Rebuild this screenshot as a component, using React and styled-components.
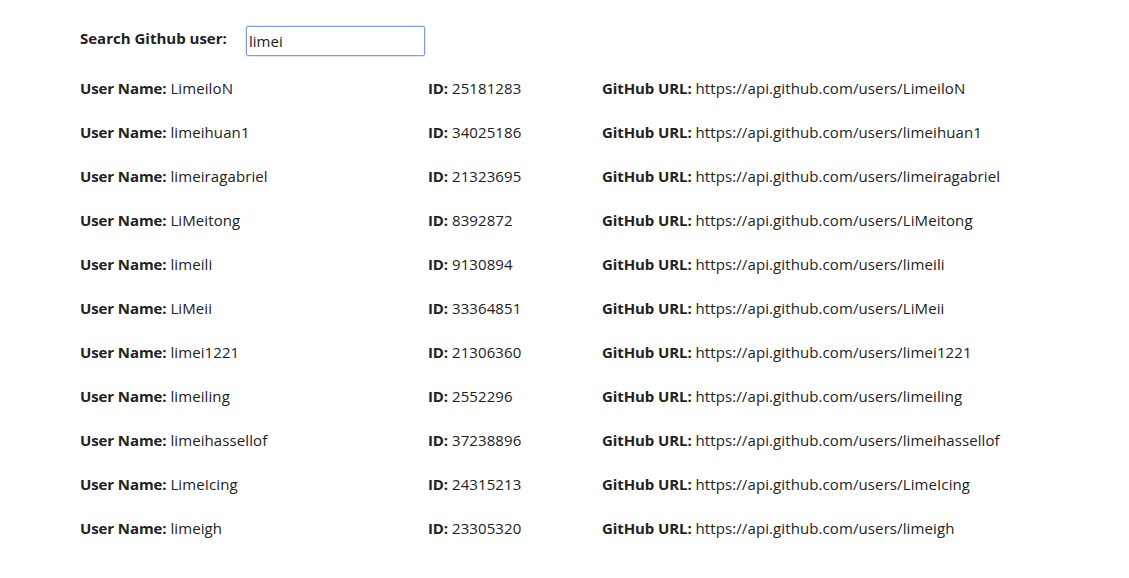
import React, { useState } from "react";
import styled, { createGlobalStyle } from "styled-components";

const GlobalStyle = createGlobalStyle`
  body {
    margin: 0;
    background: #ffffff;
    font-family: "Open Sans", "Noto Sans", sans-serif;
    color: #222222;
  }
`;

const Page = styled.div`
  padding: 25px 0 0 80px;
`;

const SearchBar = styled.div`
  display: flex;
  align-items: center;
  height: 31px;
  margin-bottom: 10px;
`;

const SearchLabel = styled.label`
  font-weight: 700;
  font-size: 15px;
  width: 166px;
  margin-bottom: 5px;
`;

const SearchInput = styled.input`
  box-sizing: border-box;
  width: 179px;
  height: 30px;
  border: 1px solid #7a9fe0;
  border-radius: 2px;
  outline: none;
  padding: 2px 2px;
  font-family: inherit;
  font-size: 15px;
  color: #222;
  box-shadow: 0 0 0 1px rgba(122, 159, 224, 0.25);
`;

const List = styled.div`
  display: flex;
  flex-direction: column;
`;

const Row = styled.div`
  display: grid;
  grid-template-columns: 348px 174px auto;
  align-items: center;
  height: 44px;
  font-size: 15px;
`;

const Field = styled.div`
  white-space: nowrap;
`;

const Key = styled.b`
  font-weight: 700;
  letter-spacing: -0.1px;
`;

const Value = styled.span`
  letter-spacing: 0.1px;
`;

const users = [
  ["LimeiloN", 25181283],
  ["limeihuan1", 34025186],
  ["limeiragabriel", 21323695],
  ["LiMeitong", 8392872],
  ["limeili", 9130894],
  ["LiMeii", 33364851],
  ["limei1221", 21306360],
  ["limeiling", 2552296],
  ["limeihassellof", 37238896],
  ["LimeIcing", 24315213],
  ["limeigh", 23305320],
];

export default function App() {
  const [query, setQuery] = useState("limei");
  return (
    <Page>
      <GlobalStyle />
      <SearchBar>
        <SearchLabel htmlFor="search">Search Github user:</SearchLabel>
        <SearchInput
          id="search"
          value={query}
          onChange={(e) => setQuery(e.target.value)}
        />
      </SearchBar>
      <List>
        {users.map(([login, id]) => (
          <Row key={login}>
            <Field>
              <Key>User Name:</Key> <Value>{login}</Value>
            </Field>
            <Field>
              <Key>ID:</Key> <Value>{id}</Value>
            </Field>
            <Field>
              <Key>GitHub URL:</Key>{" "}
              <Value>https://api.github.com/users/{login}</Value>
            </Field>
          </Row>
        ))}
      </List>
    </Page>
  );
}
